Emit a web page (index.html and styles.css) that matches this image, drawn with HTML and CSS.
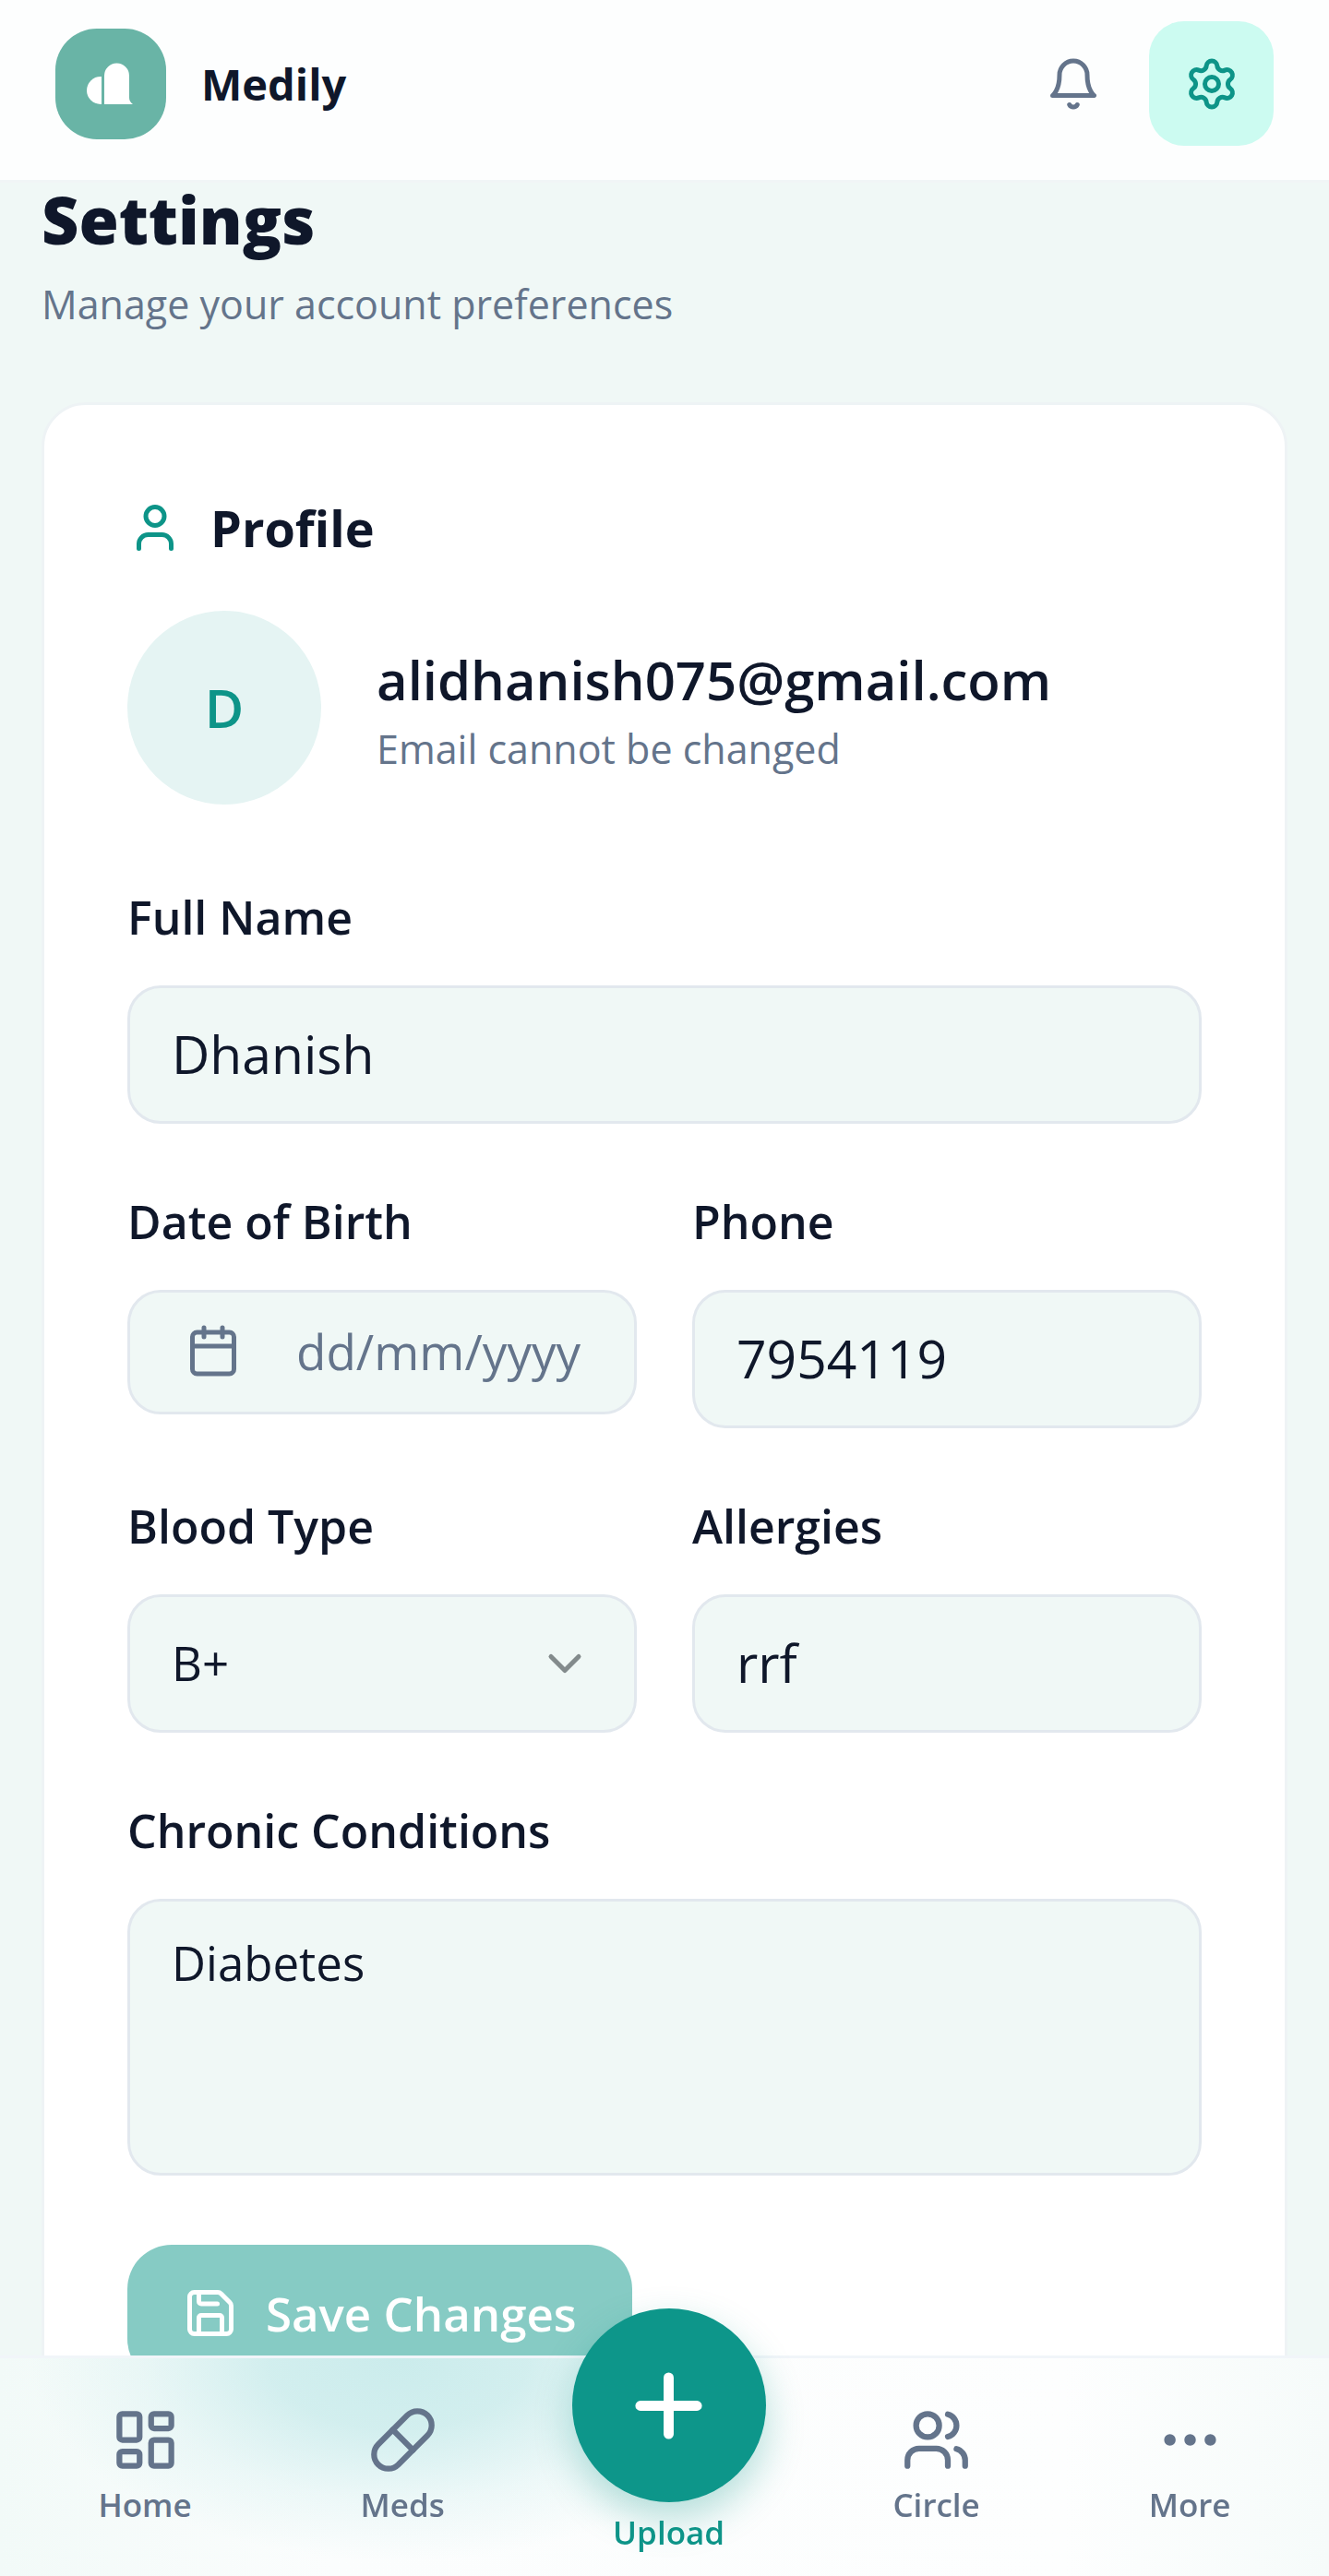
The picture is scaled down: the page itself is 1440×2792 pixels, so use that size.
FILE: index.html
```html
<!DOCTYPE html>
<html lang="en">
<head>
    <meta charset="UTF-8">
    <meta name="viewport" content="width=device-width, initial-scale=1.0">
    <title>Medily - Settings</title>
    <link rel="stylesheet" href="styles.css">
</head>
<body>
    <div class="app">
        <header class="topbar">
            <a class="brand" href="#">
                <svg class="logo" viewBox="0 0 120 120" aria-hidden="true">
                    <rect width="120" height="120" rx="45" fill="#69b4a6"/>
                    <path d="M50 52v30h-1a15 15 0 0 1 0-30z" fill="#fff"/>
                    <path d="M53 82V51a13 13 0 0 1 27 0v24q0 4 4 7z" fill="#fff"/>
                </svg>
                <span>Medily</span>
            </a>
            <div class="actions">
                <button class="icon-btn" type="button" aria-label="Notifications">
                    <svg class="icon" viewBox="0 0 24 24"><path d="M6 8a6 6 0 0 1 12 0c0 7 3 9 3 9H3s3-2 3-9"/><path d="M10.3 21a1.94 1.94 0 0 0 3.4 0"/></svg>
                </button>
                <button class="icon-btn active" type="button" aria-label="Settings">
                    <svg class="icon" viewBox="0 0 24 24"><path d="M9.671 4.136a2.34 2.34 0 0 1 4.659 0 2.34 2.34 0 0 0 3.319 1.915 2.34 2.34 0 0 1 2.33 4.033 2.34 2.34 0 0 0 0 3.831 2.34 2.34 0 0 1-2.33 4.033 2.34 2.34 0 0 0-3.319 1.915 2.34 2.34 0 0 1-4.659 0 2.34 2.34 0 0 0-3.32-1.915 2.34 2.34 0 0 1-2.33-4.033 2.34 2.34 0 0 0 0-3.831A2.34 2.34 0 0 1 6.35 6.051a2.34 2.34 0 0 0 3.319-1.915"/><circle cx="12" cy="12" r="3"/></svg>
                </button>
            </div>
        </header>

        <main class="page">
            <h1>Settings</h1>
            <p class="muted">Manage your account preferences</p>

            <form class="card">
                <h2>
                    <svg class="icon" viewBox="0 0 24 24"><path d="M19 21v-2a4 4 0 0 0-4-4H9a4 4 0 0 0-4 4v2"/><circle cx="12" cy="7" r="4"/></svg>
                    Profile
                </h2>
                <div class="account">
                    <div class="avatar">D</div>
                    <div class="account-info">
                        <p class="email">alidhanish075@gmail.com</p>
                        <p class="muted">Email cannot be changed</p>
                    </div>
                </div>

                <div class="fields">
                    <div class="field wide">
                        <label for="name">Full Name</label>
                        <input id="name" type="text" value="Dhanish">
                    </div>
                    <div class="field">
                        <label for="dob">Date of Birth</label>
                        <button id="dob" class="date-btn" type="button">
                            <svg class="icon" viewBox="0 0 24 24"><path d="M8 2v4M16 2v4M3 10h18"/><rect x="3" y="4" width="18" height="18" rx="2"/></svg>
                            <span>dd/mm/yyyy</span>
                        </button>
                    </div>
                    <div class="field">
                        <label for="phone">Phone</label>
                        <input id="phone" type="tel" value="7954119">
                    </div>
                    <div class="field">
                        <label for="blood">Blood Type</label>
                        <div class="select">
                            <select id="blood">
                                <option>A+</option>
                                <option>A-</option>
                                <option selected>B+</option>
                                <option>B-</option>
                                <option>AB+</option>
                                <option>AB-</option>
                                <option>O+</option>
                                <option>O-</option>
                            </select>
                            <svg class="icon chevron" viewBox="0 0 24 24"><path d="m6 9 6 6 6-6"/></svg>
                        </div>
                    </div>
                    <div class="field">
                        <label for="allergies">Allergies</label>
                        <input id="allergies" type="text" value="rrf">
                    </div>
                    <div class="field wide">
                        <label for="conditions">Chronic Conditions</label>
                        <textarea id="conditions">Diabetes</textarea>
                    </div>
                </div>

                <button class="save" type="button">
                    <svg class="icon" viewBox="0 0 24 24"><path d="M15.2 3a2 2 0 0 1 1.4.6l3.8 3.8a2 2 0 0 1 .6 1.4V19a2 2 0 0 1-2 2H5a2 2 0 0 1-2-2V5a2 2 0 0 1 2-2z"/><path d="M17 21v-7a1 1 0 0 0-1-1H8a1 1 0 0 0-1 1v7"/><path d="M7 3v4a1 1 0 0 0 1 1h7"/></svg>
                    Save Changes
                </button>
            </form>
        </main>

        <nav class="tabs">
            <a href="#">
                <svg class="icon" viewBox="0 0 24 24"><rect x="3" y="3" width="7" height="9" rx="1"/><rect x="14" y="3" width="7" height="5" rx="1"/><rect x="14" y="12" width="7" height="9" rx="1"/><rect x="3" y="16" width="7" height="5" rx="1"/></svg>
                Home
            </a>
            <a href="#">
                <svg class="icon" viewBox="0 0 24 24"><path d="m10.5 20.5 10-10a4.95 4.95 0 1 0-7-7l-10 10a4.95 4.95 0 1 0 7 7Z"/><path d="m8.5 8.5 7 7"/></svg>
                Meds
            </a>
            <a class="upload" href="#">
                <span class="plus">
                    <svg class="icon" viewBox="0 0 24 24"><path stroke-width="2.5" d="M5 12h14M12 5v14"/></svg>
                </span>
                Upload
            </a>
            <a href="#">
                <svg class="icon" viewBox="0 0 24 24"><path d="M16 21v-2a4 4 0 0 0-4-4H6a4 4 0 0 0-4 4v2"/><circle cx="9" cy="7" r="4"/><path d="M22 21v-2a4 4 0 0 0-3-3.87"/><path d="M16 3.13a4 4 0 0 1 0 7.75"/></svg>
                Circle
            </a>
            <a href="#">
                <svg class="icon" viewBox="0 0 24 24"><circle cx="5" cy="12" r="1"/><circle cx="12" cy="12" r="1"/><circle cx="19" cy="12" r="1"/></svg>
                More
            </a>
        </nav>
    </div>
</body>
</html>
```
FILE: styles.css
```css
*{
    box-sizing: border-box;
}
body{
    margin: 0;
    background-color: #f0f8f6;
    color: #0f172a;
    font-family: "Open Sans", "Noto Sans", sans-serif;
}
h1,h2,p{
    margin: 0;
}
a{
    color: inherit;
    text-decoration: none;
}
button,input,select,textarea{
    font-family: inherit;
    color: inherit;
    margin: 0;
}
button{
    cursor: pointer;
}
.app{
    height: 100vh;
    overflow: hidden;
}
.icon{
    display: block;
    flex: none;
    width: 60px;
    height: 60px;
    fill: none;
    stroke: currentColor;
    stroke-width: 2;
    stroke-linecap: round;
    stroke-linejoin: round;
}

/* top bar */
.topbar{
    display: flex;
    align-items: center;
    justify-content: space-between;
    padding: 23px 60px 37px;
    background-color: #fdfefe;
    border-bottom: 3px solid #f1f5f6;
}
.brand{
    display: flex;
    align-items: center;
    gap: 38px;
    font-size: 47px;
    font-weight: 700;
}
.logo{
    width: 120px;
    height: 120px;
}
.actions{
    display: flex;
    gap: 15px;
}
.icon-btn{
    width: 135px;
    height: 135px;
    padding: 0;
    display: flex;
    align-items: center;
    justify-content: center;
    border: none;
    border-radius: 38px;
    background: none;
    color: #64748b;
}
.icon-btn.active{
    background-color: #ccfbf1;
    color: #0d9488;
}

/* content */
.page{
    padding: 4px 45px 300px;
}
h1{
    font-size: 70px;
    line-height: 72px;
    font-weight: 800;
}
.muted{
    color: #64748b;
    font-size: 43px;
    line-height: 60px;
}
h1 + .muted{
    margin-top: 26px;
}
.card{
    margin-top: 76px;
    padding: 103px 90px 90px;
    background-color: #fff;
    border: 3px solid #eef3f5;
    border-radius: 48px;
}
h2{
    display: flex;
    align-items: center;
    gap: 30px;
    font-size: 54px;
    line-height: 60px;
    font-weight: 700;
}
h2 .icon{
    color: #0d9488;
}
.account{
    display: flex;
    align-items: center;
    gap: 60px;
    margin-top: 60px;
}
.avatar{
    flex: none;
    width: 210px;
    height: 210px;
    border-radius: 50%;
    background-color: #e5f4f3;
    color: #0d9488;
    font-size: 58px;
    line-height: 210px;
    font-weight: 600;
    text-align: center;
}
.account-info{
    min-width: 0;
    padding-top: 12px;
}
.email{
    margin-bottom: 12px;
    font-size: 58px;
    line-height: 66px;
    font-weight: 600;
}

/* form */
.fields{
    display: grid;
    grid-template-columns: 1fr 1fr;
    gap: 82px 60px;
    align-items: start;
    margin-top: 98px;
}
.wide{
    grid-column: 1 / -1;
}
.field{
    display: flex;
    flex-direction: column;
    gap: 50px;
}
label{
    font-size: 50px;
    line-height: 48px;
    font-weight: 600;
}
input,select,textarea,.date-btn{
    display: block;
    width: 100%;
    height: 150px;
    padding: 0 45px 3px;
    border: 3px solid #e2e8ee;
    border-radius: 36px;
    background-color: #f0f8f6;
    font-size: 57px;
}
select,textarea{
    font-size: 51px;
}
.date-btn{
    display: flex;
    align-items: center;
    gap: 60px;
    height: 135px;
    padding: 0 45px 3px 60px;
    color: #64748b;
    font-size: 53px;
}
.select{
    position: relative;
}
select{
    appearance: none;
}
.chevron{
    position: absolute;
    top: 45px;
    right: 48px;
    color: #838b8c;
    pointer-events: none;
}
textarea{
    height: 300px;
    padding: 33px 45px;
    line-height: 66px;
    resize: none;
}
.save{
    display: flex;
    align-items: center;
    gap: 30px;
    height: 150px;
    margin-top: 75px;
    padding: 0 60px 3px;
    border: none;
    border-radius: 48px;
    background-color: #86cbc4;
    color: #fff;
    font-size: 51px;
    font-weight: 600;
}

/* bottom tabs */
.tabs{
    position: fixed;
    left: 0;
    right: 0;
    bottom: 0;
    height: 239px;
    display: flex;
    justify-content: space-around;
    align-items: flex-start;
    padding: 51px 15px 0;
    border-top: 3px solid #f1f5f9;
    background:
        radial-gradient(ellipse 400px 220px at 30% 0, #cbecec, rgba(203, 236, 236, .85) 35%, rgba(203, 236, 236, .3) 70%, rgba(203, 236, 236, 0)),
        linear-gradient(to right, #f2faf8, #fbfdfd 25%, #fdfefe 80%, #f6fbfa);
}
.tabs a{
    display: flex;
    flex-direction: column;
    align-items: center;
    gap: 15px;
    padding: 0 45px;
    color: #64748b;
    font-size: 35px;
    line-height: 36px;
    font-weight: 600;
}
.tabs .icon{
    width: 75px;
    height: 75px;
}
.tabs .upload{
    margin-top: -105px;
    padding: 0;
    color: #0d9488;
}
.plus{
    width: 210px;
    height: 210px;
    display: flex;
    align-items: center;
    justify-content: center;
    border-radius: 50%;
    background-color: #0d968a;
    box-shadow: 0 18px 42px rgba(13, 148, 136, .3);
    color: #fff;
}
.tabs .plus .icon{
    width: 105px;
    height: 105px;
}
```
